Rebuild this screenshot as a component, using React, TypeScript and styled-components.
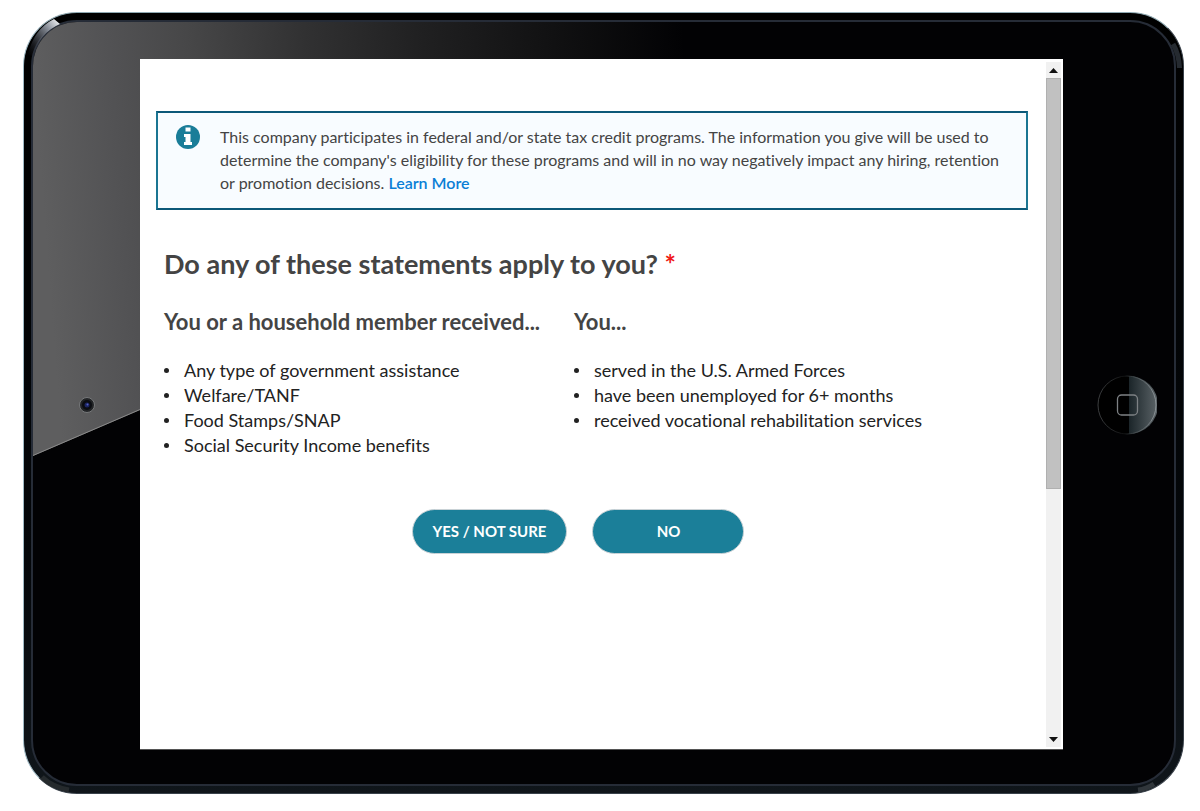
import React from 'react';
import styled, { createGlobalStyle } from 'styled-components';

const GlobalStyle = createGlobalStyle`
  *, *::before, *::after { box-sizing: border-box; }
  body {
    margin: 0;
    background: #fff;
    color: #222;
    font-family: Lato, 'Liberation Sans', sans-serif;
    font-variant-ligatures: none;
  }
`;

const Page = styled.div`
  min-height: 100vh;
  display: flex;
  padding: 12px 16px 17px 23px;
`;

const Tablet = styled.div`
  position: relative;
  flex: 1;
  display: flex;
  padding: 7px;
  border: 1px solid #39414a;
  border-top-color: #8fa9b2;
  border-left-color: #9fb9c4;
  border-radius: 54px;
  background: linear-gradient(#000 0, #04070a 70%, #10161b 100%);
`;

const Glass = styled.div`
  position: relative;
  flex: 1;
  display: grid;
  grid-template-columns: 107px minmax(0, 1fr) 111px;
  padding: 37px 0 34px;
  border: 2px solid #262c37;
  border-radius: 46px;
  background: #020204;
  overflow: hidden;
`;

const Glare = styled.svg`
  position: absolute;
  top: 0;
  left: 0;
  width: 650px;
  height: 434px;
`;

const Glint = styled.svg<{ $bottom?: boolean; $right?: boolean }>`
  position: absolute;
  ${p => (p.$bottom ? 'bottom: -1px;' : 'top: -1px;')}
  ${p => (p.$right ? 'right: -1px;' : 'left: -1px;')}
  width: 60px;
  height: 60px;
`;

const Bezel = styled.div`
  position: relative;
  display: flex;
  align-items: center;
  justify-content: center;
`;

const HomeButton = styled.button`
  display: flex;
  padding: 0;
  border: 0;
  border-radius: 50%;
  background: none;
  cursor: pointer;
  margin-left: 16px;
`;

const Screen = styled.main`
  position: relative;
  display: flex;
  background: #fff;
  border: 1px solid #555;
  border-width: 0 0 1px;
`;

const Content = styled.div`
  flex: 1;
  padding: 52px 18px 0 16px;
`;

const Notice = styled.section`
  display: flex;
  align-items: flex-start;
  gap: 20px;
  padding: 12px 14px 14px 18px;
  border: 2px solid #1a7592;
  border-top-color: #0c5878;
  border-bottom-color: #0c5878;
  background: #f8fcff;
`;

const NoticeText = styled.p`
  flex: 1;
  margin: 0;
  color: #444;
  font-size: 16px;
  line-height: 23px;
`;

const InfoIcon = styled.svg`
  flex: none;
  width: 24px;
  height: 24px;
`;

const LearnMore = styled.a`
  color: #0a7fd6;
  font-weight: 600;
  text-decoration: none;
`;

const Question = styled.h1`
  margin: 37px 8px 27px;
  color: #444;
  font-size: 27px;
  font-weight: 700;
  line-height: 34px;
`;

const Required = styled.span`
  color: #f01818;
`;

const Columns = styled.div`
  display: grid;
  grid-template-columns: 410px 1fr;
  padding-left: 8px;
`;

const GroupTitle = styled.h2`
  margin: 0 0 22px;
  color: #444;
  font-size: 22px;
  font-weight: 700;
  line-height: 28px;
`;

const Statements = styled.ul`
  margin: 0;
  padding: 0;
  list-style: none;
`;

const Statement = styled.li`
  display: flex;
  align-items: center;
  gap: 15px;
  font-size: 18px;
  line-height: 25px;

  &::before {
    content: '';
    width: 5px;
    height: 5px;
    border-radius: 50%;
    background: #222;
  }
`;

const Actions = styled.div`
  display: flex;
  justify-content: center;
  gap: 25px;
  margin-top: 51px;
  padding-right: 28px;
`;

const Answer = styled.button`
  min-width: 152px;
  height: 45px;
  padding: 0 20px 2px;
  border: 1px solid #c9d2d6;
  border-radius: 23px;
  background: #1b7f99;
  color: #fff;
  font-family: inherit;
  font-size: 15px;
  font-weight: 700;
  cursor: pointer;
`;

const ScrollBar = styled.div`
  display: flex;
  flex-direction: column;
  width: 17px;
  padding: 3px 2px 2px 0;
`;

const ScrollArrow = styled.button`
  display: flex;
  align-items: center;
  justify-content: center;
  height: 16px;
  padding: 0;
  border: 0;
  background: #f1f1f1;
`;

const Track = styled.div`
  flex: 1;
  background: #f1f1f1;
`;

const Thumb = styled.div`
  height: 63%;
  border: 1px solid #b0b0b0;
  background: #c1c1c1;
`;

const groups = [
  {
    title: 'You or a household member received...',
    items: [
      'Any type of government assistance',
      'Welfare/TANF',
      'Food Stamps/SNAP',
      'Social Security Income benefits',
    ],
  },
  {
    title: 'You...',
    items: [
      'served in the U.S. Armed Forces',
      'have been unemployed for 6+ months',
      'received vocational rehabilitation services',
    ],
  },
];

function Camera() {
  return (
    <svg width="16" height="16" viewBox="0 0 16 16" aria-hidden="true">
      <circle cx="8" cy="8" r="7.5" fill="#222426" stroke="#77797b" />
      <circle cx="8" cy="8" r="5" fill="#0b0d12" />
      <circle cx="8" cy="8" r="2.5" fill="#1c2560" />
      <circle cx="8.5" cy="7.5" r="1" fill="#5361c8" />
    </svg>
  );
}

function HomeIcon() {
  return (
    <svg width="60" height="60" viewBox="0 0 60 60" aria-hidden="true">
      <defs>
        <linearGradient id="homeShade">
          <stop offset="0" stopColor="#1b2529" />
          <stop offset="1" stopColor="#5c6468" />
        </linearGradient>
        <linearGradient id="homeRim">
          <stop offset="0" stopColor="#3c3e40" />
          <stop offset="0.45" stopColor="#101112" />
          <stop offset="0.6" stopColor="#3c4346" />
          <stop offset="1" stopColor="#8d9498" />
        </linearGradient>
      </defs>
      <circle cx="30" cy="30" r="29" fill="#000" />
      <path d="M32 1A29 29 0 0 1 32 59Z" fill="url(#homeShade)" />
      <circle cx="30" cy="30" r="29" fill="none" stroke="url(#homeRim)" />
      <rect x="20.5" y="20" width="20" height="20" rx="4" fill="none" stroke="#7d8184" strokeWidth="1.3" />
    </svg>
  );
}

function TabletFrame({ children }: { children: React.ReactNode }) {
  return (
    <Tablet>
      <Glass>
        <Glare viewBox="0 0 650 434" aria-hidden="true">
          <defs>
            <linearGradient id="glare" gradientUnits="userSpaceOnUse" x1="0" y1="50" x2="650" y2="0">
              <stop offset="0" stopColor="#5e5e5f" />
              <stop offset="0.12" stopColor="#525254" />
              <stop offset="0.24" stopColor="#474748" />
              <stop offset="0.42" stopColor="#313132" />
              <stop offset="0.6" stopColor="#202021" />
              <stop offset="0.8" stopColor="#111112" />
              <stop offset="1" stopColor="#020204" />
            </linearGradient>
          </defs>
          <path d="M0 0H650V155L0 434Z" fill="url(#glare)" />
          <path d="M0 433.500L107 387.500" stroke="#8a8a8a" />
        </Glare>
        <Bezel>
          <Camera />
        </Bezel>
        {children}
        <Bezel>
          <HomeButton aria-label="Home">
            <HomeIcon />
          </HomeButton>
        </Bezel>
      </Glass>
      <Glint viewBox="0 0 60 60" aria-hidden="true">
        <defs>
          <linearGradient id="glint" x1="1" y1="0" x2="0" y2="1">
            <stop offset="0" stopColor="#fff" />
            <stop offset="0.3" stopColor="#8f959f" />
            <stop offset="1" stopColor="#20242e" stopOpacity="0" />
          </linearGradient>
        </defs>
        <path d="M31 7L37 12Q16 21 10 45L5 42Q11 17 31 7Z" fill="url(#glint)" />
      </Glint>
      <Glint $right viewBox="0 0 60 60" aria-hidden="true">
        <path d="M49 32Q55 42 55.500 56" fill="none" stroke="#252a30" strokeWidth="5" />
      </Glint>
      <Glint $bottom viewBox="0 0 60 60" aria-hidden="true">
        <path d="M19 43Q29 53 46 56" fill="none" stroke="#252a2d" strokeWidth="5" />
      </Glint>
      <Glint $right $bottom viewBox="0 0 60 60" aria-hidden="true">
        <path d="M14 56Q22 55 30 50" fill="none" stroke="#30363b" strokeWidth="5" />
      </Glint>
    </Tablet>
  );
}

export default function App() {
  return (
    <Page>
      <GlobalStyle />
      <TabletFrame>
        <Screen>
          <Content>
            <Notice>
              <InfoIcon viewBox="0 0 24 24" aria-hidden="true">
                <circle cx="12" cy="12" r="12" fill="#1a7d98" />
                <path d="M9.500 2.500h5v4h-5zM8 9h6.500v8H16v3H8v-3h1.500v-5H8z" fill="#fff" />
              </InfoIcon>
              <NoticeText>
                This company participates in federal and/or state tax credit programs. The
                information you give will be used to determine the company's eligibility for
                these programs and will in no way negatively impact any hiring, retention or
                promotion decisions. <LearnMore href="#learn-more">Learn More</LearnMore>
              </NoticeText>
            </Notice>
            <Question>
              Do any of these statements apply to you? <Required>*</Required>
            </Question>
            <Columns>
              {groups.map(group => (
                <section key={group.title}>
                  <GroupTitle>{group.title}</GroupTitle>
                  <Statements>
                    {group.items.map(item => (
                      <Statement key={item}>{item}</Statement>
                    ))}
                  </Statements>
                </section>
              ))}
            </Columns>
            <Actions>
              <Answer>YES / NOT SURE</Answer>
              <Answer>NO</Answer>
            </Actions>
          </Content>
          <ScrollBar>
            <ScrollArrow aria-label="Scroll up">
              <svg width="9" height="5" viewBox="0 0 9 5" aria-hidden="true">
                <path d="M0 5L4.500 0L9 5Z" fill="#111" />
              </svg>
            </ScrollArrow>
            <Track>
              <Thumb />
            </Track>
            <ScrollArrow aria-label="Scroll down">
              <svg width="9" height="5" viewBox="0 0 9 5" aria-hidden="true">
                <path d="M0 0L4.500 5L9 0Z" fill="#111" />
              </svg>
            </ScrollArrow>
          </ScrollBar>
        </Screen>
      </TabletFrame>
    </Page>
  );
}
